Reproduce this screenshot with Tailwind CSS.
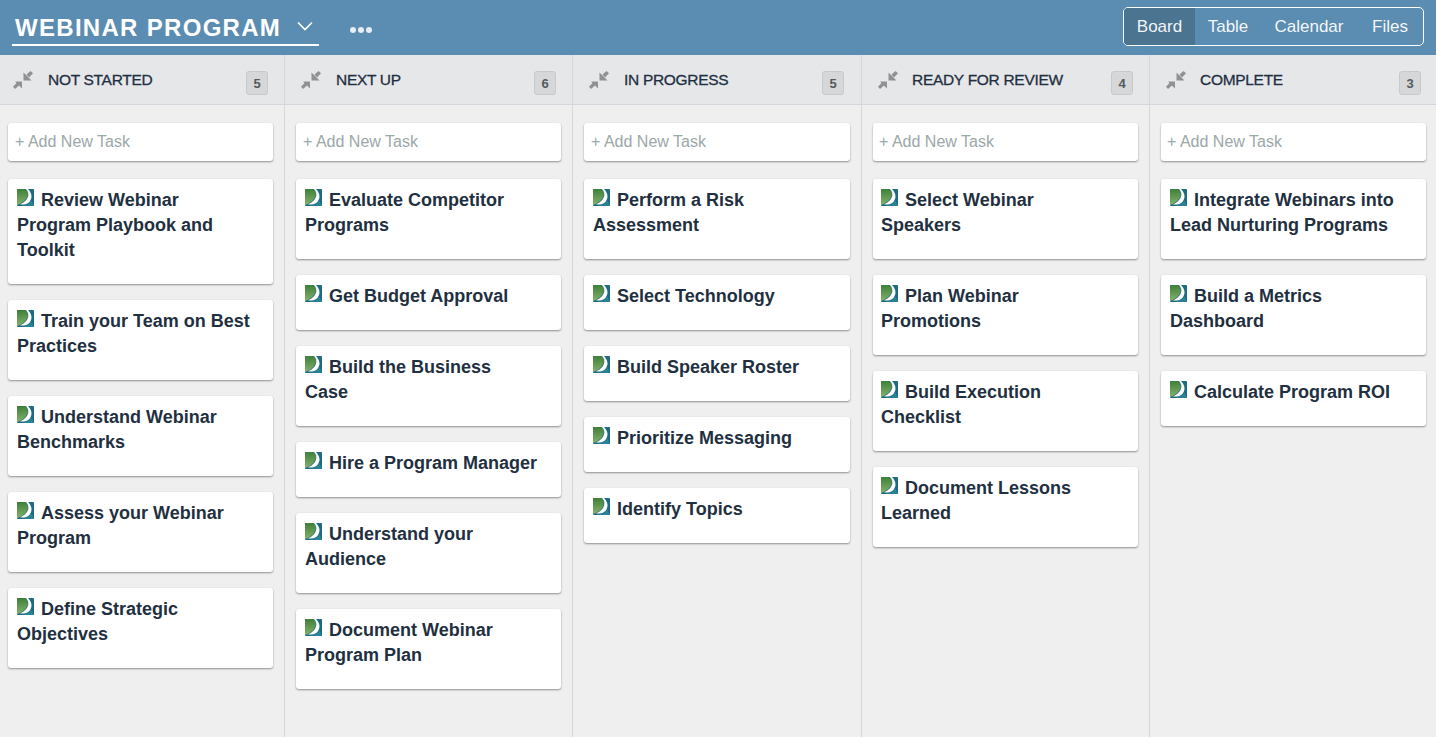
<!doctype html>
<html><head><meta charset="utf-8"><script src="https://cdn.jsdelivr.net/npm/@tailwindcss/browser@4"></script></head>
<body class="h-[737px] w-[1436px] overflow-hidden bg-[#efefef] font-['Liberation_Sans',sans-serif] text-[#1f3041]">
<svg class="absolute h-0 w-0"><defs>
<linearGradient id="g" x1="0" y1="0" x2="0" y2="1"><stop offset="0" stop-color="#3f7f3a"/><stop offset="1" stop-color="#86b268"/></linearGradient>
<symbol id="leaf" viewBox="0 0 17 17"><rect width="17" height="17" rx="1" fill="#1d6b82"/><path d="M0 0H9C12 4 12 10 3 15L0 16Z" fill="url(#g)"/><path d="M9 0C13 4 12.500 11 3 15.500C9 16 13.500 14.500 14.500 8C14.800 5 13 2 11 0Z" fill="#fff"/><path d="M3 17C8 16.500 12 15 14.500 11.500L17 17Z" fill="#2a8296"/></symbol>
<symbol id="shrink" viewBox="0 0 20 18"><path d="M10.500 9.500V1.500L18.500 9.500ZM13.500 3.500L17.500 0L20 2.300L16 6.500ZM9 10.500V17.500L2 10.500ZM3.500 12L0 15.700L2 18L6 14.500Z" fill="#8f9192"/></symbol>
</defs></svg>

<header class="flex h-[55px] items-start justify-between bg-[#5b8cb1] pl-3 pr-3 text-white">
  <div class="flex items-start">
    <div class="mt-[11px] flex h-[35px] w-[307px] items-center border-b-2 border-white pl-[3px]">
      <span class="shrink-0 whitespace-nowrap text-[24px] leading-[33px] font-bold tracking-[1.3px]">WEBINAR PROGRAM</span>
      <svg class="ml-[15px] mb-[3px] h-[11px] w-[18px] shrink-0" viewBox="0 0 18 11" fill="none" stroke="#fff" stroke-width="1.700"><path d="M2 1.500L9 8.500L16 1.500"/></svg>
    </div>
    <div class="ml-[31px] mt-[27px] flex gap-[2px]"><i class="size-[6px] rounded-full bg-white/85"></i><i class="size-[6px] rounded-full bg-white/85"></i><i class="size-[6px] rounded-full bg-white/85"></i></div>
  </div>
  <nav class="mt-[7px] flex h-[39px] w-[301px] overflow-hidden rounded-[5px] border border-white text-[17px] leading-[38px] text-white/95">
    <span class="w-[71px] bg-[#4a7490] text-center">Board</span>
    <span class="w-[66px] text-center">Table</span>
    <span class="w-[96px] text-center">Calendar</span>
    <span class="flex-1 text-center">Files</span>
  </nav>
</header>

<main class="flex h-[682px]">
  <section class="w-[285px] border-r border-[#d5d7dc]">
    <div class="flex h-[50px] items-start border-b border-[#d5d7dc] bg-[#e6e7e9] pl-[13px] pr-[16px]">
      <svg class="mt-[16px] h-[18px] w-[20px]"><use href="#shrink"/></svg>
      <h2 class="ml-[15px] mt-[13px] flex-1 text-[15.5px] leading-[24px] tracking-[-.3px] [-webkit-text-stroke:.3px]">NOT STARTED</h2>
      <b class="mt-[16px] h-[24px] w-[22px] rounded-[3px] border border-[#c8c9cb] bg-[#d6d7d9] text-center text-[13px] leading-[24px] text-[#555a5f]">5</b>
    </div>
    <div class="flex flex-col gap-4 pl-2 pr-[11px] pt-[18px]">
      <div class="mb-[2px] h-[38px] rounded-[3px] bg-white pl-[7px] text-[16px] leading-[37px] text-[#99a8a8] shadow-[0_1px_2px_rgba(0,0,0,.4)]">+ Add New Task</div>
      <article class="rounded-[3px] bg-white pb-[21px] pl-[9px] pr-[22px] pt-[9px] text-[18px] leading-[25px] font-bold shadow-[0_1px_2px_rgba(0,0,0,.4)]"><svg class="mr-[7px] inline-block size-[17px] align-[0px]"><use href="#leaf"/></svg>Review Webinar Program Playbook and Toolkit</article>
      <article class="rounded-[3px] bg-white pb-[21px] pl-[9px] pr-[22px] pt-[9px] text-[18px] leading-[25px] font-bold shadow-[0_1px_2px_rgba(0,0,0,.4)]"><svg class="mr-[7px] inline-block size-[17px] align-[0px]"><use href="#leaf"/></svg>Train your Team on Best Practices</article>
      <article class="rounded-[3px] bg-white pb-[21px] pl-[9px] pr-[22px] pt-[9px] text-[18px] leading-[25px] font-bold shadow-[0_1px_2px_rgba(0,0,0,.4)]"><svg class="mr-[7px] inline-block size-[17px] align-[0px]"><use href="#leaf"/></svg>Understand Webinar Benchmarks</article>
      <article class="rounded-[3px] bg-white pb-[21px] pl-[9px] pr-[22px] pt-[9px] text-[18px] leading-[25px] font-bold shadow-[0_1px_2px_rgba(0,0,0,.4)]"><svg class="mr-[7px] inline-block size-[17px] align-[0px]"><use href="#leaf"/></svg>Assess your Webinar Program</article>
      <article class="rounded-[3px] bg-white pb-[21px] pl-[9px] pr-[22px] pt-[9px] text-[18px] leading-[25px] font-bold shadow-[0_1px_2px_rgba(0,0,0,.4)]"><svg class="mr-[7px] inline-block size-[17px] align-[0px]"><use href="#leaf"/></svg>Define Strategic Objectives</article>
    </div>
  </section>

  <section class="w-[288px] border-r border-[#d5d7dc]">
    <div class="flex h-[50px] items-start border-b border-[#d5d7dc] bg-[#e6e7e9] pl-[16px] pr-[16px]">
      <svg class="mt-[16px] h-[18px] w-[20px]"><use href="#shrink"/></svg>
      <h2 class="ml-[15px] mt-[13px] flex-1 text-[15.5px] leading-[24px] tracking-[-.3px] [-webkit-text-stroke:.3px]">NEXT UP</h2>
      <b class="mt-[16px] h-[24px] w-[22px] rounded-[3px] border border-[#c8c9cb] bg-[#d6d7d9] text-center text-[13px] leading-[24px] text-[#555a5f]">6</b>
    </div>
    <div class="flex flex-col gap-4 pl-[11px] pr-[11px] pt-[18px]">
      <div class="mb-[2px] h-[38px] rounded-[3px] bg-white pl-[7px] text-[16px] leading-[37px] text-[#99a8a8] shadow-[0_1px_2px_rgba(0,0,0,.4)]">+ Add New Task</div>
      <article class="rounded-[3px] bg-white pb-[21px] pl-[9px] pr-[22px] pt-[9px] text-[18px] leading-[25px] font-bold shadow-[0_1px_2px_rgba(0,0,0,.4)]"><svg class="mr-[7px] inline-block size-[17px] align-[0px]"><use href="#leaf"/></svg>Evaluate Competitor Programs</article>
      <article class="rounded-[3px] bg-white pb-[21px] pl-[9px] pr-[22px] pt-[9px] text-[18px] leading-[25px] font-bold shadow-[0_1px_2px_rgba(0,0,0,.4)]"><svg class="mr-[7px] inline-block size-[17px] align-[0px]"><use href="#leaf"/></svg>Get Budget Approval</article>
      <article class="rounded-[3px] bg-white pb-[21px] pl-[9px] pr-[40px] pt-[9px] text-[18px] leading-[25px] font-bold shadow-[0_1px_2px_rgba(0,0,0,.4)]"><svg class="mr-[7px] inline-block size-[17px] align-[0px]"><use href="#leaf"/></svg>Build the Business Case</article>
      <article class="rounded-[3px] bg-white pb-[21px] pl-[9px] pr-[22px] pt-[9px] text-[18px] leading-[25px] font-bold shadow-[0_1px_2px_rgba(0,0,0,.4)]"><svg class="mr-[7px] inline-block size-[17px] align-[0px]"><use href="#leaf"/></svg>Hire a Program Manager</article>
      <article class="rounded-[3px] bg-white pb-[21px] pl-[9px] pr-[22px] pt-[9px] text-[18px] leading-[25px] font-bold shadow-[0_1px_2px_rgba(0,0,0,.4)]"><svg class="mr-[7px] inline-block size-[17px] align-[0px]"><use href="#leaf"/></svg>Understand your Audience</article>
      <article class="rounded-[3px] bg-white pb-[21px] pl-[9px] pr-[22px] pt-[9px] text-[18px] leading-[25px] font-bold shadow-[0_1px_2px_rgba(0,0,0,.4)]"><svg class="mr-[7px] inline-block size-[17px] align-[0px]"><use href="#leaf"/></svg>Document Webinar Program Plan</article>
    </div>
  </section>

  <section class="w-[289px] border-r border-[#d5d7dc]">
    <div class="flex h-[50px] items-start border-b border-[#d5d7dc] bg-[#e6e7e9] pl-[16px] pr-[17px]">
      <svg class="mt-[16px] h-[18px] w-[20px]"><use href="#shrink"/></svg>
      <h2 class="ml-[15px] mt-[13px] flex-1 text-[15.5px] leading-[24px] tracking-[-.3px] [-webkit-text-stroke:.3px]">IN PROGRESS</h2>
      <b class="mt-[16px] h-[24px] w-[22px] rounded-[3px] border border-[#c8c9cb] bg-[#d6d7d9] text-center text-[13px] leading-[24px] text-[#555a5f]">5</b>
    </div>
    <div class="flex flex-col gap-4 pl-[11px] pr-[11px] pt-[18px]">
      <div class="mb-[2px] h-[38px] rounded-[3px] bg-white pl-[7px] text-[16px] leading-[37px] text-[#99a8a8] shadow-[0_1px_2px_rgba(0,0,0,.4)]">+ Add New Task</div>
      <article class="rounded-[3px] bg-white pb-[21px] pl-[9px] pr-[22px] pt-[9px] text-[18px] leading-[25px] font-bold shadow-[0_1px_2px_rgba(0,0,0,.4)]"><svg class="mr-[7px] inline-block size-[17px] align-[0px]"><use href="#leaf"/></svg>Perform a Risk Assessment</article>
      <article class="rounded-[3px] bg-white pb-[21px] pl-[9px] pr-[22px] pt-[9px] text-[18px] leading-[25px] font-bold shadow-[0_1px_2px_rgba(0,0,0,.4)]"><svg class="mr-[7px] inline-block size-[17px] align-[0px]"><use href="#leaf"/></svg>Select Technology</article>
      <article class="rounded-[3px] bg-white pb-[21px] pl-[9px] pr-[22px] pt-[9px] text-[18px] leading-[25px] font-bold shadow-[0_1px_2px_rgba(0,0,0,.4)]"><svg class="mr-[7px] inline-block size-[17px] align-[0px]"><use href="#leaf"/></svg>Build Speaker Roster</article>
      <article class="rounded-[3px] bg-white pb-[21px] pl-[9px] pr-[22px] pt-[9px] text-[18px] leading-[25px] font-bold shadow-[0_1px_2px_rgba(0,0,0,.4)]"><svg class="mr-[7px] inline-block size-[17px] align-[0px]"><use href="#leaf"/></svg>Prioritize Messaging</article>
      <article class="rounded-[3px] bg-white pb-[21px] pl-[9px] pr-[22px] pt-[9px] text-[18px] leading-[25px] font-bold shadow-[0_1px_2px_rgba(0,0,0,.4)]"><svg class="mr-[7px] inline-block size-[17px] align-[0px]"><use href="#leaf"/></svg>Identify Topics</article>
    </div>
  </section>

  <section class="w-[288px] border-r border-[#d5d7dc]">
    <div class="flex h-[50px] items-start border-b border-[#d5d7dc] bg-[#e6e7e9] pl-[16px] pr-[16px]">
      <svg class="mt-[16px] h-[18px] w-[20px]"><use href="#shrink"/></svg>
      <h2 class="ml-[14px] mt-[13px] flex-1 text-[15.5px] leading-[24px] tracking-[-.3px] [-webkit-text-stroke:.3px]">READY FOR REVIEW</h2>
      <b class="mt-[16px] h-[24px] w-[22px] rounded-[3px] border border-[#c8c9cb] bg-[#d6d7d9] text-center text-[13px] leading-[24px] text-[#555a5f]">4</b>
    </div>
    <div class="flex flex-col gap-4 pl-[11px] pr-[11px] pt-[18px]">
      <div class="mb-[2px] h-[38px] rounded-[3px] bg-white pl-[6px] text-[16px] leading-[37px] text-[#99a8a8] shadow-[0_1px_2px_rgba(0,0,0,.4)]">+ Add New Task</div>
      <article class="rounded-[3px] bg-white pb-[21px] pl-[8px] pr-[40px] pt-[9px] text-[18px] leading-[25px] font-bold shadow-[0_1px_2px_rgba(0,0,0,.4)]"><svg class="mr-[7px] inline-block size-[17px] align-[0px]"><use href="#leaf"/></svg>Select Webinar Speakers</article>
      <article class="rounded-[3px] bg-white pb-[21px] pl-[8px] pr-[22px] pt-[9px] text-[18px] leading-[25px] font-bold shadow-[0_1px_2px_rgba(0,0,0,.4)]"><svg class="mr-[7px] inline-block size-[17px] align-[0px]"><use href="#leaf"/></svg>Plan Webinar Promotions</article>
      <article class="rounded-[3px] bg-white pb-[21px] pl-[8px] pr-[22px] pt-[9px] text-[18px] leading-[25px] font-bold shadow-[0_1px_2px_rgba(0,0,0,.4)]"><svg class="mr-[7px] inline-block size-[17px] align-[0px]"><use href="#leaf"/></svg>Build Execution Checklist</article>
      <article class="rounded-[3px] bg-white pb-[21px] pl-[8px] pr-[22px] pt-[9px] text-[18px] leading-[25px] font-bold shadow-[0_1px_2px_rgba(0,0,0,.4)]"><svg class="mr-[7px] inline-block size-[17px] align-[0px]"><use href="#leaf"/></svg>Document Lessons Learned</article>
    </div>
  </section>

  <section class="flex-1">
    <div class="flex h-[50px] items-start border-b border-[#d5d7dc] bg-[#e6e7e9] pl-[16px] pr-[15px]">
      <svg class="mt-[16px] h-[18px] w-[20px]"><use href="#shrink"/></svg>
      <h2 class="ml-[14px] mt-[13px] flex-1 text-[15.5px] leading-[24px] tracking-[-.3px] [-webkit-text-stroke:.3px]">COMPLETE</h2>
      <b class="mt-[16px] h-[24px] w-[22px] rounded-[3px] border border-[#c8c9cb] bg-[#d6d7d9] text-center text-[13px] leading-[24px] text-[#555a5f]">3</b>
    </div>
    <div class="flex flex-col gap-4 pl-[11px] pr-[10px] pt-[18px]">
      <div class="mb-[2px] h-[38px] rounded-[3px] bg-white pl-[6px] text-[16px] leading-[37px] text-[#99a8a8] shadow-[0_1px_2px_rgba(0,0,0,.4)]">+ Add New Task</div>
      <article class="rounded-[3px] bg-white pb-[21px] pl-[9px] pr-[22px] pt-[9px] text-[18px] leading-[25px] font-bold shadow-[0_1px_2px_rgba(0,0,0,.4)]"><svg class="mr-[7px] inline-block size-[17px] align-[0px]"><use href="#leaf"/></svg>Integrate Webinars into Lead Nurturing Programs</article>
      <article class="rounded-[3px] bg-white pb-[21px] pl-[9px] pr-[22px] pt-[9px] text-[18px] leading-[25px] font-bold shadow-[0_1px_2px_rgba(0,0,0,.4)]"><svg class="mr-[7px] inline-block size-[17px] align-[0px]"><use href="#leaf"/></svg>Build a Metrics Dashboard</article>
      <article class="rounded-[3px] bg-white pb-[21px] pl-[9px] pr-[22px] pt-[9px] text-[18px] leading-[25px] font-bold shadow-[0_1px_2px_rgba(0,0,0,.4)]"><svg class="mr-[7px] inline-block size-[17px] align-[0px]"><use href="#leaf"/></svg>Calculate Program ROI</article>
    </div>
  </section>
</main>
</body></html>
